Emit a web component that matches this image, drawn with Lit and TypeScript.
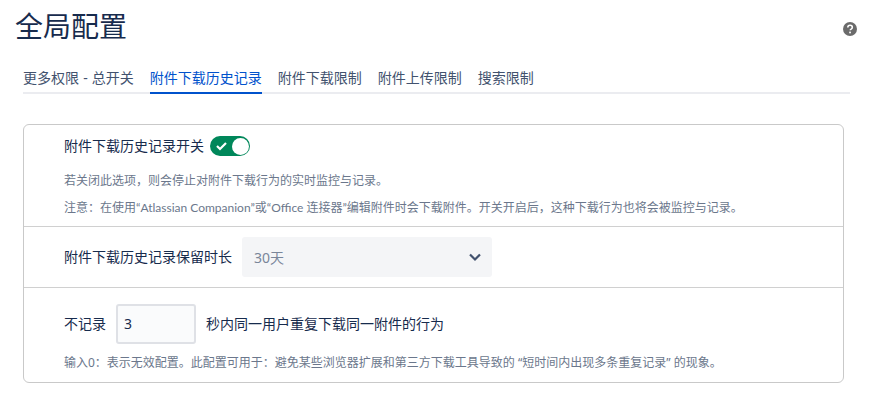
import { LitElement, html, css } from "lit";
import { customElement } from "lit/decorators.js";

@customElement("app-root")
export class AppRoot extends LitElement {
  static styles = css`
    :host {
      display: block;
      width: 871px;
      height: 407px;
      overflow: hidden;
      background: #fff;
      color: #172b4d;
      font-family: "Noto Sans", "Noto Sans CJK SC", sans-serif;
      font-size: 14px;
    }
    .head {
      display: flex;
      justify-content: space-between;
      align-items: center;
      height: 54px;
      padding: 0 14px 0 15px;
    }
    h1 {
      margin: -5px 0 0;
      font-size: 28px;
      font-weight: 400;
      line-height: 54px;
      font-family: "Noto Sans CJK SC", sans-serif;
    }
    .help { display: block; width: 14px; height: 14px; margin-top: 4px; }
    .tabs {
      display: flex;
      gap: 16px;
      margin: 10px 21px 0 23px;
      height: 28px;
      border-bottom: 2px solid #ebecf0;
    }
    .tab {
      line-height: 28px;
      color: #42526e;
      height: 28px;
      white-space: nowrap;
    }
    .dash { margin: 0 0.5px; }
    .tab.active {
      color: #0052cc;
      box-shadow: inset 0 -2px 0 #0052cc;
      height: 30px;
    }
    .card {
      margin: 30px 27px 0 23px;
      border: 1px solid #c9c9c9;
      border-radius: 6px;
      height: 259px;
      box-sizing: border-box;
      display: flex;
      flex-direction: column;
    }
    .sec { padding-left: 40px; box-sizing: border-box; }
    .sec + .sec { border-top: 1px solid #d0d0d0; }
    .s1 { height: 101px; padding-top: 11px; }
    .s2 { height: 61px; display: flex; align-items: center; gap: 10px; }
    .s3 { flex: 1; padding-top: 16px; }
    .row { display: flex; align-items: center; height: 20px; }
    .row .lbl { margin-right: 6px; }
    .up { margin-bottom: 2px; }
    .row .up { margin-bottom: 3px; }
    .toggle {
      width: 40px;
      height: 20px;
      border-radius: 10px;
      background: #00875a;
      position: relative;
      display: flex;
      align-items: center;
      padding-left: 6px;
      box-sizing: border-box;
    }
    .toggle i {
      position: absolute;
      right: 1px;
      top: 1.5px;
      width: 17px;
      height: 17px;
      border-radius: 50%;
      background: #fff;
    }
    .note {
      font-size: 12px;
      color: #6b778c;
      line-height: 18px;
      white-space: nowrap;
    }
    .latin { font-family: Lato, "Noto Sans CJK SC", sans-serif; }
    .n1 { margin-top: 16px; }
    .n2 { margin-top: 9px; }
    .select {
      width: 250px;
      height: 40px;
      border-radius: 3px;
      background: #f4f5f7;
      color: #7a869a;
      display: flex;
      align-items: center;
      justify-content: space-between;
      padding: 0 10px 0 12px;
      box-sizing: border-box;
    }
    .row3 { display: flex; align-items: center; height: 40px; }
    .input {
      width: 80px;
      height: 40px;
      margin: 0 10px;
      border: 2px solid #dfe1e6;
      border-radius: 3px;
      background: #fafbfc;
      box-sizing: border-box;
      padding-left: 6px;
      line-height: 36px;
    }
    .n3 { margin-top: 10px; }
  `;

  render() {
    return html`
      <div class="head">
        <h1>全局配置</h1>
        <svg class="help" viewBox="0 0 14 14">
          <circle cx="7" cy="7" r="7" fill="#6b6b6b"></circle>
          <path d="M4.8 5.4c0-1.3 1-2.2 2.3-2.2s2.2.8 2.2 2c0 1-.6 1.5-1.2 1.9-.5.3-.8.6-.8 1.2" fill="none" stroke="#fff" stroke-width="1.6"></path>
          <rect x="6.2" y="9.6" width="1.7" height="1.7" fill="#fff"></rect>
        </svg>
      </div>
      <div class="tabs">
        <div class="tab">更多权限 <span class="dash">-</span> 总开关</div>
        <div class="tab active">附件下载历史记录</div>
        <div class="tab">附件下载限制</div>
        <div class="tab">附件上传限制</div>
        <div class="tab">搜索限制</div>
      </div>
      <div class="card">
        <div class="sec s1">
          <div class="row">
            <span class="lbl up">附件下载历史记录开关</span>
            <span class="toggle">
              <svg width="12" height="10" viewBox="0 0 12 10"><path d="M1 5l3 3 6-6" fill="none" stroke="#fff" stroke-width="2.2"></path></svg>
              <i></i>
            </span>
          </div>
          <div class="note n1">若关闭此选项，则会停止对附件下载行为的实时监控与记录。</div>
          <div class="note n2 latin">注意：在使用“Atlassian Companion”或“Office 连接器”编辑附件时会下载附件。开关开启后，这种下载行为也将会被监控与记录。</div>
        </div>
        <div class="sec s2">
          <span class="up">附件下载历史记录保留时长</span>
          <div class="select">
            <span>30天</span>
            <svg width="14" height="10" viewBox="0 0 14 10"><path d="M2 2.5l5 5 5-5" fill="none" stroke="#42526e" stroke-width="2.2"></path></svg>
          </div>
        </div>
        <div class="sec s3">
          <div class="row3">
            <span class="up">不记录</span>
            <div class="input">3</div>
            <span class="up">秒内同一用户重复下载同一附件的行为</span>
          </div>
          <div class="note n3">输入0：表示无效配置。此配置可用于：避免某些浏览器扩展和第三方下载工具导致的 “短时间内出现多条重复记录” 的现象。</div>
        </div>
      </div>
    `;
  }
}
